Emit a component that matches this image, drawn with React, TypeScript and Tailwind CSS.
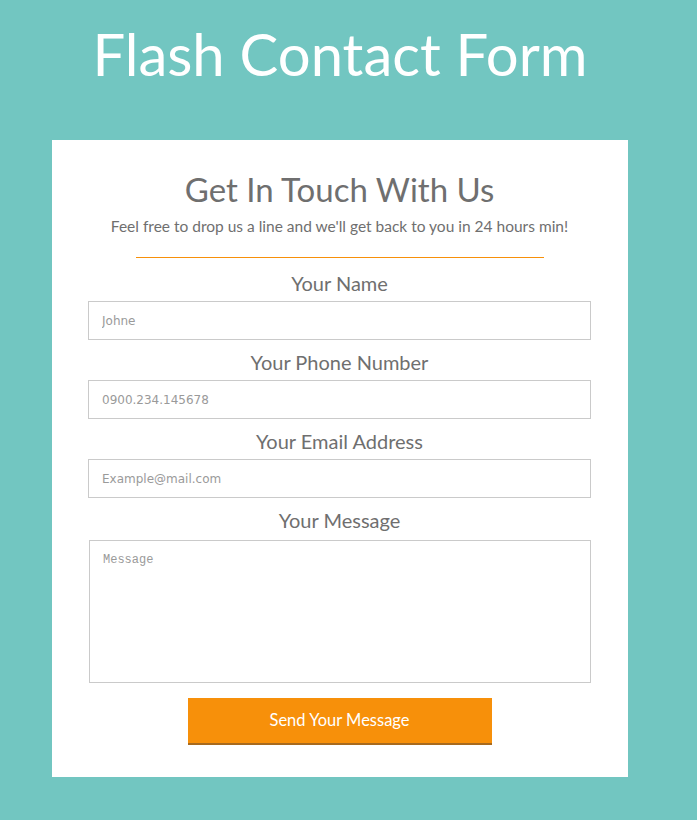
import React from "react";

function Field({ label, placeholder }: { label: string; placeholder: string }) {
  return (
    <div>
      <label className="block h-[40px] text-center font-['Lato',sans-serif] text-[20px] leading-[44px] text-[#6f6f6f]">
        {label}
      </label>
      <input
        type="text"
        placeholder={placeholder}
        className="block h-[39px] w-full border border-[#cacaca] bg-white px-[13px] font-['DejaVu_Sans',Tahoma,sans-serif] text-[12px] text-[#555] outline-none placeholder:text-[#9a9a9a]"
      />
    </div>
  );
}

export default function App() {
  return (
    <div className="min-h-[820px] bg-[#72c6c1]">
      <div className="w-[680px]">
        {/* Page title */}
        <h1 className="pt-[18px] text-center font-['Lato',sans-serif] text-[58px] leading-[72px] text-white">
          Flash Contact Form
        </h1>

        {/* Card */}
        <div className="mx-auto mt-[50px] w-[576px] bg-white pb-[32px] pl-[36px] pr-[37px] pt-[26px] font-['Lato',sans-serif] text-[#6f6f6f]">
          <h2 className="text-center text-[33px] leading-[46px]">Get In Touch With Us</h2>
          <p className="mt-[4px] text-center text-[15.5px] leading-[20px]">
            Feel free to drop us a line and we'll get back to you in 24 hours min!
          </p>
          <div className="mx-auto mt-[21px] h-px w-[408px] bg-[#f7900a]" />

          <div className="mt-[3px]">
            <Field label="Your Name" placeholder="Johne" />
            <Field label="Your Phone Number" placeholder="0900.234.145678" />
            <Field label="Your Email Address" placeholder="Example@mail.com" />
            <label className="block h-[42px] text-center text-[20px] leading-[44px]">Your Message</label>
            <textarea
              placeholder="Message"
              className="ml-px block h-[143px] w-[502px] resize-none border border-[#cacaca] px-[13px] py-[10px] font-['Liberation_Mono',monospace] text-[12px] outline-none placeholder:text-[#9a9a9a]"
            />
          </div>

          <div className="mt-[15px] flex justify-center">
            <button className="h-[47px] w-[304px] border-b-2 border-[#a86a1e] bg-[#f7900a] text-[16.5px] text-white">
              Send Your Message
            </button>
          </div>
        </div>
      </div>
    </div>
  );
}
